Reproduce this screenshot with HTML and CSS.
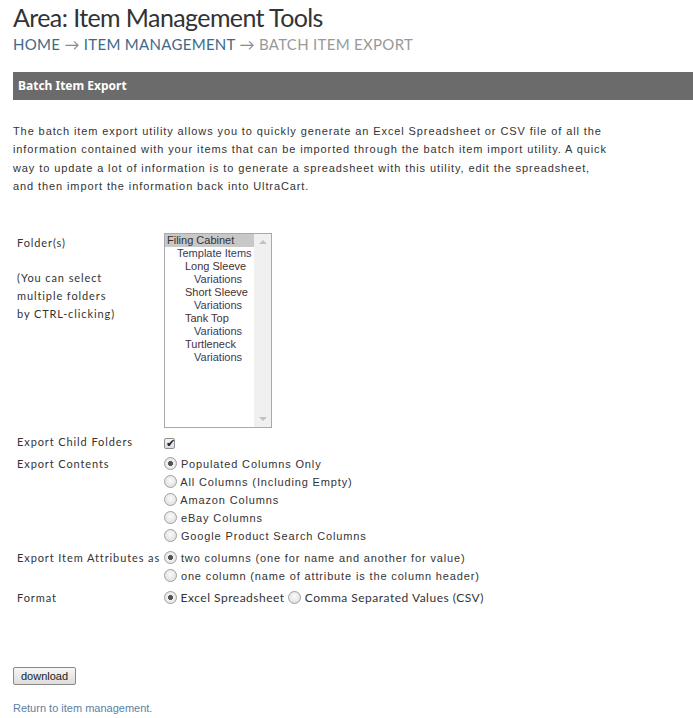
FILE: index.html
```html
<!DOCTYPE html>
<html lang="en">
<head>
    <meta charset="UTF-8">
    <title>Batch Item Export</title>
    <link rel="stylesheet" href="styles.css">
</head>
<body>

    <!-- Page heading and breadcrumb -->
    <div class="page-head">
        <h1>Area: Item Management Tools</h1>
        <div class="crumbs">
            <a href="#">Home</a> &rarr; <a href="#">Item Management</a> &rarr; <span class="current">Batch Item Export</span>
        </div>
    </div>

    <div class="section-bar">Batch Item Export</div>

    <p class="intro">The batch item export utility allows you to quickly generate an Excel Spreadsheet or CSV file of all the information contained with your items that can be imported through the batch item import utility. A quick way to update a lot of information is to generate a spreadsheet with this utility, edit the spreadsheet, and then import the information back into UltraCart.</p>

    <form class="export-form">
        <table class="form-table">
            <tr>
                <td class="label">
                    Folder(s)
                    <div class="hint">(You can select<br>multiple folders<br>by CTRL-clicking)</div>
                </td>
                <td>
                    <div class="folder-list">
                        <ul class="folders">
                            <li class="selected">Filing Cabinet</li>
                            <li class="lvl1">Template Items</li>
                            <li class="lvl2">Long Sleeve</li>
                            <li class="lvl3">Variations</li>
                            <li class="lvl2">Short Sleeve</li>
                            <li class="lvl3">Variations</li>
                            <li class="lvl2">Tank Top</li>
                            <li class="lvl3">Variations</li>
                            <li class="lvl2">Turtleneck</li>
                            <li class="lvl3">Variations</li>
                        </ul>
                        <div class="scroll-track">
                            <span class="arrow up"></span>
                            <span class="arrow down"></span>
                        </div>
                    </div>
                </td>
            </tr>
            <tr>
                <td class="label">Export Child Folders</td>
                <td><input type="checkbox" class="check" checked></td>
            </tr>
            <tr>
                <td class="label">Export Contents</td>
                <td>
                    <label class="opt"><input type="radio" name="contents" checked> Populated Columns Only</label>
                    <label class="opt"><input type="radio" name="contents"> All Columns (Including Empty)</label>
                    <label class="opt"><input type="radio" name="contents"> Amazon Columns</label>
                    <label class="opt"><input type="radio" name="contents"> eBay Columns</label>
                    <label class="opt"><input type="radio" name="contents"> Google Product Search Columns</label>
                </td>
            </tr>
            <tr>
                <td class="label">Export Item Attributes as</td>
                <td>
                    <label class="opt"><input type="radio" name="attrs" checked> two columns (one for name and another for value)</label>
                    <label class="opt"><input type="radio" name="attrs"> one column (name of attribute is the column header)</label>
                </td>
            </tr>
            <tr>
                <td class="label">Format</td>
                <td class="formats">
                    <label><input type="radio" name="format" checked> Excel Spreadsheet</label>
                    <label><input type="radio" name="format"> Comma Separated Values (CSV)</label>
                </td>
            </tr>
        </table>

        <button type="button" class="btn-download">download</button>
    </form>

    <a class="back-link" href="#">Return to item management.</a>

</body>
</html>
```

FILE: styles.css
```css
/* Page */
body {
    margin: 0;
    padding: 0 0 0 13px;
    background: #fff;
    color: #333;
    font-family: "Liberation Sans", Arial, sans-serif;
    overflow: hidden;
}

.page-head h1 {
    margin: 0;
    padding-top: 2px;
    font-family: Lato, sans-serif;
    font-weight: normal;
    font-size: 25px;
    letter-spacing: -0.6px;
    line-height: 30px;
    color: #333;
}
.crumbs {
    margin-top: 2px;
    font-family: Lato, sans-serif;
    font-size: 15px;
    letter-spacing: 0.3px;
    line-height: 20px;
    text-transform: uppercase;
    color: #8a8a8a;
}
.crumbs a {
    color: #3d6a89;
    text-decoration: none;
}
.crumbs .current {
    color: #999;
}

/* Grey title bar */
.section-bar {
    margin-top: 18px;
    height: 28px;
    line-height: 28px;
    padding-left: 5px;
    background: #6b6b6b;
    color: #fff;
    font-family: "Noto Sans", sans-serif;
    font-weight: bold;
    font-size: 12px;
}

.intro {
    width: 597px;
    margin: 22px 0 0;
    font-size: 11px;
    letter-spacing: 0.9px;
    line-height: 18.4px;
    color: #333;
}

/* Export form */
.export-form {
    margin-top: 36px;
}
.form-table {
    border-collapse: collapse;
}
.form-table td {
    padding: 0 0 4px;
    vertical-align: top;
}
.form-table .label {
    width: 147px;
    padding-left: 4px;
    font-family: Lato, sans-serif;
    font-size: 11px;
    letter-spacing: 0.9px;
    line-height: 18px;
    color: #333;
}
.form-table tr:first-child td {
    padding-bottom: 0;
}
.form-table tr:first-child .label {
    padding-top: 2px;
}
.hint {
    margin-top: 17px;
}

/* Folder picker */
.folder-list {
    display: flex;
    width: 106px;
    height: 193px;
    border: 1px solid #a9a9a9;
    margin: 1px 0 5px;
    background: #fff;
}
.folders {
    list-style: none;
    margin: 0;
    padding: 0;
    flex: 1;
    font-size: 11px;
    line-height: 13px;
    color: #333;
}
.folders li {
    padding-left: 2px;
    white-space: nowrap;
}
.folders .selected {
    background: #c8c8c8;
}
.folders .lvl1 { padding-left: 12px; color: #3a3a5a; }
.folders .lvl2 { padding-left: 20px; color: #4a3030; }
.folders .lvl3 { padding-left: 29px; color: #3a3a5a; }

.scroll-track {
    width: 17px;
    background: #f0f0f0;
    display: flex;
    flex-direction: column;
    justify-content: space-between;
    align-items: center;
    padding: 6px 0;
}
.arrow {
    width: 0;
    height: 0;
    border-left: 4px solid transparent;
    border-right: 4px solid transparent;
}
.arrow.up { border-bottom: 4px solid #c2c2c2; }
.arrow.down { border-top: 4px solid #c2c2c2; }

/* Checkbox and radios */
.check,
.form-table input[type="radio"] {
    -webkit-appearance: none;
    appearance: none;
    margin: 0;
    vertical-align: -2px;
}
.check {
    width: 11px;
    height: 11px;
    border: 1px solid #8f8f8f;
    border-radius: 2px;
    background: linear-gradient(#f4f4f4, #dcdcdc);
    position: relative;
}
.check:checked::after {
    content: "\2714";
    position: absolute;
    left: 1px;
    top: -2px;
    font-size: 11px;
    color: #222;
}
.form-table input[type="radio"] {
    width: 13px;
    height: 13px;
    border: 1px solid #a0a0a0;
    border-radius: 50%;
    background: radial-gradient(circle at 50% 40%, #fafafa, #dadada);
    box-sizing: border-box;
}
.form-table input[type="radio"]:checked {
    background: radial-gradient(circle, #555 0 2.3px, #f2f2f2 2.8px, #dadada 100%);
}

.opt {
    display: block;
    font-size: 11px;
    line-height: 18px;
    letter-spacing: 0.86px;
    color: #333;
}
.formats {
    font-family: Lato, sans-serif;
    font-size: 12px;
    line-height: 18px;
    letter-spacing: 0.5px;
}

/* Download button and back link */
.btn-download {
    margin-top: 56px;
    height: 18px;
    padding: 0 7px;
    font-family: "Liberation Sans", Arial, sans-serif;
    font-size: 11px;
    color: #222;
    background: linear-gradient(#f6f6f6, #dddddd);
    border: 1px solid #8a8a8a;
    border-radius: 2px;
}
.back-link {
    display: block;
    margin-top: 17px;
    font-size: 11px;
    color: #5b7fa3;
    text-decoration: none;
}
```
